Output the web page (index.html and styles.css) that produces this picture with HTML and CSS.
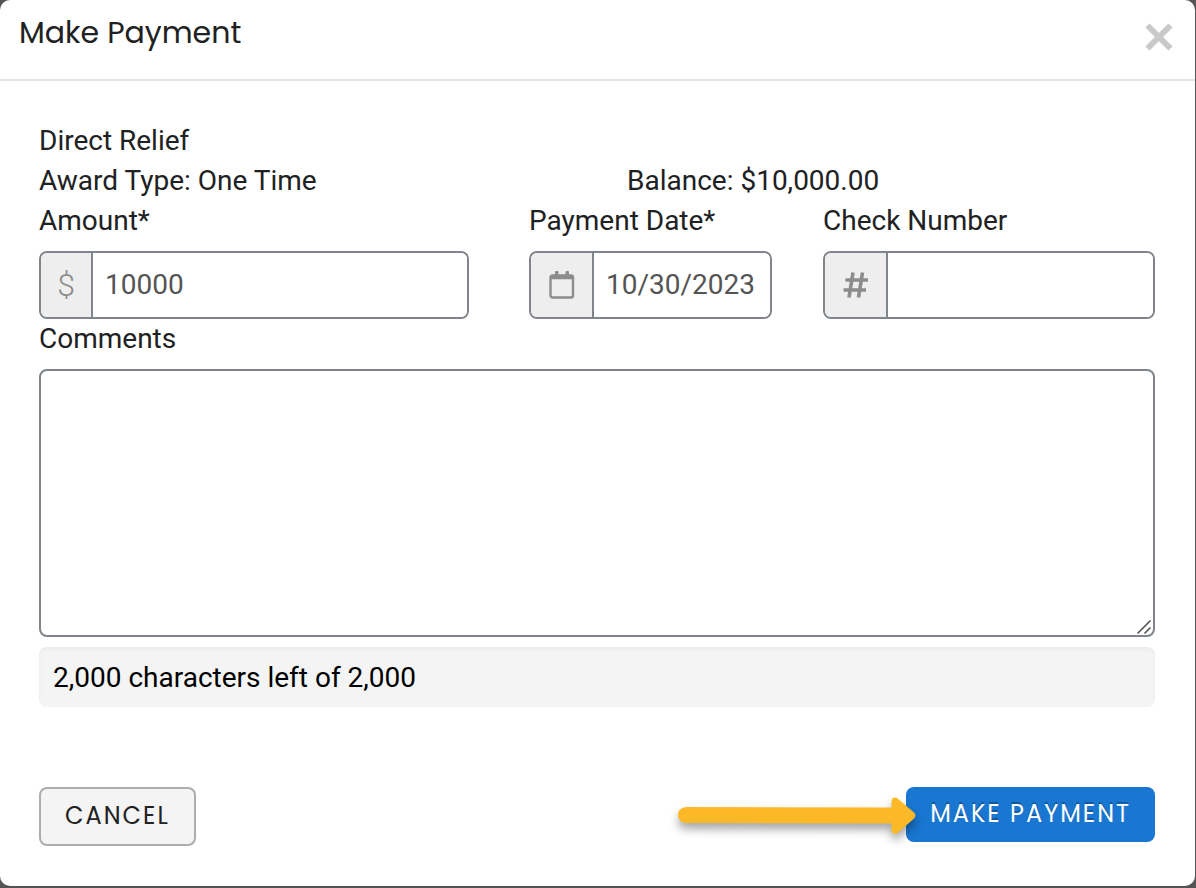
FILE: index.html
```html
<!DOCTYPE html>
<html lang="en">
<head>
<meta charset="utf-8">
<meta name="viewport" content="width=device-width, initial-scale=1">
<title>Make Payment</title>
<link rel="stylesheet" href="styles.css">
</head>
<body>
<form class="modal" role="dialog" aria-labelledby="modal-title">
  <header class="modal-header">
    <h1 class="modal-title" id="modal-title">Make Payment</h1>
    <button class="close" type="button" aria-label="Close">
      <svg class="close-icon" viewBox="0 0 28 28" aria-hidden="true"><path d="M2.500 2.500L25.500 25.500M25.500 2.500L2.500 25.500" stroke="currentColor" stroke-width="6" fill="none"/></svg>
    </button>
  </header>
  <main class="modal-body">
    <p class="line">Direct Relief</p>
    <div class="summary">
      <p class="line">Award Type: One Time</p>
      <p class="line">Balance: $10,000.00</p>
    </div>
    <div class="fields">
      <div class="field field-amount">
        <label class="line" for="amount">Amount*</label>
        <div class="group">
          <span class="addon addon-narrow" aria-hidden="true">$</span>
          <input class="control" id="amount" type="text" value="10000">
        </div>
      </div>
      <div class="field field-date">
        <label class="line" for="date">Payment Date*</label>
        <div class="group">
          <span class="addon" aria-hidden="true">
            <svg class="icon" viewBox="0 0 28 28"><path d="M8 0h1.500q1 0 1 1V5H7V1q0-1 1-1zM18.500 0H20q1 0 1 1V5h-3.500V1q0-1 1-1z" fill="currentColor"/><rect x="2.500" y="4.500" width="22.500" height="22" rx="2" fill="none" stroke="currentColor" stroke-width="2.400"/><path d="M2 4.500h23.500v3.800H2z" fill="currentColor"/></svg>
          </span>
          <input class="control" id="date" type="text" value="10/30/2023">
        </div>
      </div>
      <div class="field">
        <label class="line" for="check">Check Number</label>
        <div class="group">
          <span class="addon" aria-hidden="true">
            <svg class="icon" viewBox="0 0 28 28"><path d="M11 1.500L7 26.500M20.500 1.500L16.500 26.500M3.500 9H26M1.500 19H24" stroke="currentColor" stroke-width="3.600" fill="none"/></svg>
          </span>
          <input class="control" id="check" type="text">
        </div>
      </div>
    </div>
    <label class="line" for="comments">Comments</label>
    <div class="comments-box">
      <textarea class="comments" id="comments"></textarea>
      <svg class="grip" viewBox="0 0 16 16" aria-hidden="true"><path d="M1.500 14.500L14.500 1.500M8.500 14.500L14.500 8.500" stroke="#555" stroke-width="1.600" fill="none"/></svg>
    </div>
    <p class="counter">2,000 characters left of 2,000</p>
  </main>
  <footer class="modal-footer">
    <button class="btn btn-cancel" type="button">CANCEL</button>
    <div class="submit">
      <button class="btn btn-primary" type="submit">MAKE PAYMENT</button>
      <svg class="arrow" viewBox="0 0 260 60" aria-hidden="true"><path d="M18 12L223.500 12.600V6.500Q224 1 229 3L246 17.500Q249 20.500 246 23.500L229 38.500Q224 40 223.500 35V28.600L18 28Q10 27 10 20Q10 13 18 12Z" fill="#fcb927"/></svg>
    </div>
  </footer>
</form>
</body>
</html>
```
FILE: styles.css
```css
* {
  box-sizing: border-box;
}

body {
  margin: 0;
  background: #555354;
  color: #202122;
  font-family: Roboto, "Liberation Sans", sans-serif;
  font-size: 28px;
  line-height: 40px;
}

.modal {
  margin: 0 1px 2px 0;
  background: #fff;
  border-radius: 10px;
}

.modal-header {
  display: flex;
  justify-content: space-between;
  align-items: flex-start;
  padding: 13px 20px 26px 19px;
  border-bottom: 2px solid #e4e4e4;
}

.modal-title {
  margin: 0;
  font-family: Poppins, Inter, sans-serif;
  font-size: 30px;
  font-weight: 400;
  line-height: 40px;
}

.close {
  display: flex;
  margin-top: 10px;
  padding: 0 2px;
  border: 0;
  background: none;
  color: #c9c9c9;
}

.close-icon {
  width: 28px;
  height: 28px;
}

.modal-body {
  padding: 40px 40px 0 39px;
}

.line {
  display: block;
  margin: 0;
}

.summary {
  display: grid;
  grid-template-columns: 588fr 528fr;
}

.fields {
  display: grid;
  grid-template-columns: 490fr 294fr 332fr;
}

.field {
  min-width: 0;
}

.field-amount {
  padding-right: 60px;
}

.field-date {
  padding-right: 51px;
}

.group {
  display: flex;
  height: 68px;
  margin-top: 10px;
  overflow: hidden;
  border: 2px solid #80858b;
  border-radius: 8px;
}

.addon {
  display: flex;
  flex: none;
  align-items: center;
  justify-content: center;
  width: 63px;
  border-right: 2px solid #80858b;
  background: #eee;
  color: #8c8c8c;
}

.addon-narrow {
  width: 52px;
  font-size: 32px;
  font-weight: 300;
}

.icon {
  width: 28px;
  height: 28px;
}

.control {
  flex: 1;
  min-width: 0;
  padding: 0 12px;
  border: 0;
  background: #fff;
  color: #555;
  font: inherit;
}

.comments-box {
  position: relative;
  margin-top: 10px;
}

.comments {
  display: block;
  width: 100%;
  height: 268px;
  padding: 12px;
  border: 2px solid #80858b;
  border-radius: 8px;
  background: #fff;
  color: #555;
  font: inherit;
  resize: none;
}

.grip {
  position: absolute;
  right: 3px;
  bottom: 2px;
  width: 16px;
  height: 16px;
}

.counter {
  margin: 10px 0 0;
  padding: 11px 14px 9px;
  border-radius: 8px;
  background: #f4f4f4;
  box-shadow: inset 0 2px 4px rgba(0, 0, 0, 0.04);
  color: #000;
}

.modal-footer {
  display: flex;
  align-items: flex-start;
  justify-content: space-between;
  padding: 80px 40px 40px 39px;
}

.btn {
  display: block;
  padding: 0 24px 2px;
  border-radius: 8px;
  font-family: Poppins, Inter, sans-serif;
  font-size: 24px;
  letter-spacing: 2px;
}

.btn-cancel {
  height: 59px;
  border: 2px solid #adadad;
  background: #f4f4f4;
  color: #202122;
}

.submit {
  position: relative;
}

.btn-primary {
  height: 55px;
  border: 0;
  background: #1976d1;
  color: #fff;
  font-weight: 400;
  text-shadow: 0 -2px 0 rgba(0, 0, 0, 0.25);
}

.arrow {
  position: absolute;
  top: 8px;
  right: 227px;
  width: 260px;
  height: 60px;
  filter: drop-shadow(0 6px 5px rgba(0, 0, 0, 0.35));
  pointer-events: none;
}
```
